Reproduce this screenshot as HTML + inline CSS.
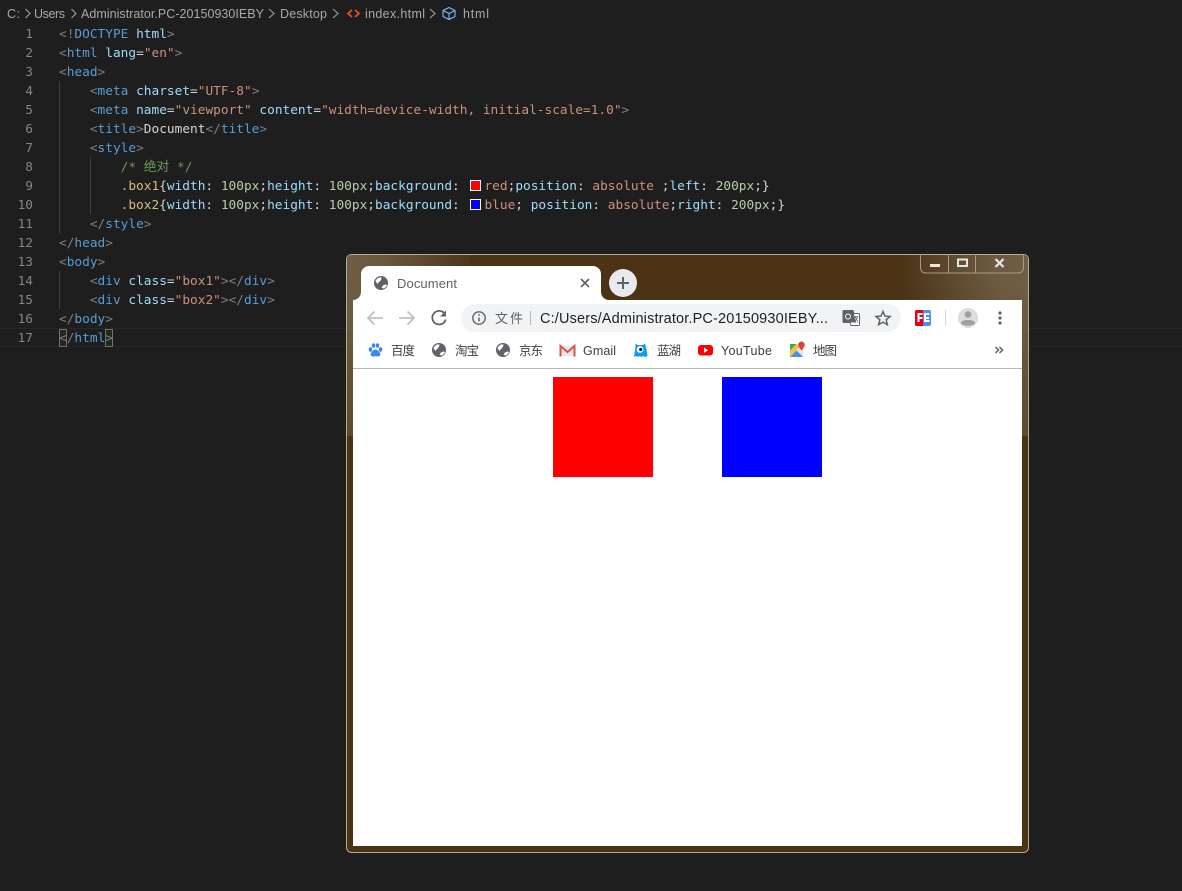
<!DOCTYPE html>
<html lang="zh">
<head>
<meta charset="utf-8">
<title>Document</title>
<style>
html,body{margin:0;padding:0;width:1182px;height:891px;overflow:hidden;background:#1e1e1e}
#wrap{position:relative;width:1182px;height:891px;overflow:hidden;background:#1e1e1e}
.abs{position:absolute}
pre{margin:0;font:12.8px/19px "DejaVu Sans Mono","Noto Sans CJK SC",monospace;position:absolute;white-space:pre;color:#d4d4d4}
#code{left:59px;top:25px}
#nums{left:0;top:25px;width:33px;text-align:right;color:#858585}
.g{color:#808080}.t{color:#569cd6}.a{color:#9cdcfe}.s{color:#ce9178}.w{color:#d4d4d4}
.c{color:#6a9955}.k{color:#d7ba7d}.n{color:#b5cea8}
.sw{display:inline-block;width:17px;height:11px;position:relative;vertical-align:-1px}
.sw i{position:absolute;left:3px;top:0;width:9px;height:9px;border:1px solid #fff}
svg text{font-family:"Liberation Sans","Noto Sans CJK SC",sans-serif}
</style>
</head>
<body>
<div id="wrap">
<div class="abs" style="left:0;top:328px;width:1182px;height:17px;border-top:1px solid #282828;border-bottom:1px solid #282828"></div>
<div class="abs" style="left:59px;top:81px;width:1px;height:152px;background:#404040"></div>
<div class="abs" style="left:90px;top:157px;width:1px;height:57px;background:#404040"></div>
<div class="abs" style="left:59px;top:271px;width:1px;height:38px;background:#404040"></div>
<div class="abs" style="left:59px;top:329px;width:6px;height:16px;border:1px solid #707070;background:#1f2a1f"></div>
<div class="abs" style="left:105px;top:329px;width:6px;height:16px;border:1px solid #707070;background:#1f2a1f"></div>
<pre id="nums">1
2
3
4
5
6
7
8
9
10
11
12
13
14
15
16
17</pre>
<pre id="code"><span class="g">&lt;!</span><span class="t">DOCTYPE</span> <span class="a">html</span><span class="g">&gt;</span>
<span class="g">&lt;</span><span class="t">html</span> <span class="a">lang</span>=<span class="s">"en"</span><span class="g">&gt;</span>
<span class="g">&lt;</span><span class="t">head</span><span class="g">&gt;</span>
    <span class="g">&lt;</span><span class="t">meta</span> <span class="a">charset</span>=<span class="s">"UTF-8"</span><span class="g">&gt;</span>
    <span class="g">&lt;</span><span class="t">meta</span> <span class="a">name</span>=<span class="s">"viewport"</span> <span class="a">content</span>=<span class="s">"width=device-width, initial-scale=1.0"</span><span class="g">&gt;</span>
    <span class="g">&lt;</span><span class="t">title</span><span class="g">&gt;</span>Document<span class="g">&lt;/</span><span class="t">title</span><span class="g">&gt;</span>
    <span class="g">&lt;</span><span class="t">style</span><span class="g">&gt;</span>
        <span class="c">/* 绝对 */</span>
        <span class="k">.box1</span>{<span class="a">width</span>: <span class="n">100px</span>;<span class="a">height</span>: <span class="n">100px</span>;<span class="a">background</span>: <span class="sw"><i style="background:#f00"></i></span><span class="s">red</span>;<span class="a">position</span>: <span class="s">absolute</span> ;<span class="a">left</span>: <span class="n">200px</span>;}
        <span class="k">.box2</span>{<span class="a">width</span>: <span class="n">100px</span>;<span class="a">height</span>: <span class="n">100px</span>;<span class="a">background</span>: <span class="sw"><i style="background:#00f"></i></span><span class="s">blue</span>; <span class="a">position</span>: <span class="s">absolute</span>;<span class="a">right</span>: <span class="n">200px</span>;}
    <span class="g">&lt;/</span><span class="t">style</span><span class="g">&gt;</span>
<span class="g">&lt;/</span><span class="t">head</span><span class="g">&gt;</span>
<span class="g">&lt;</span><span class="t">body</span><span class="g">&gt;</span>
    <span class="g">&lt;</span><span class="t">div</span> <span class="a">class</span>=<span class="s">"box1"</span><span class="g">&gt;&lt;/</span><span class="t">div</span><span class="g">&gt;</span>
    <span class="g">&lt;</span><span class="t">div</span> <span class="a">class</span>=<span class="s">"box2"</span><span class="g">&gt;&lt;/</span><span class="t">div</span><span class="g">&gt;</span>
<span class="g">&lt;/</span><span class="t">body</span><span class="g">&gt;</span>
<span class="g">&lt;/</span><span class="t">html</span><span class="g">&gt;</span></pre>

<svg class="abs" style="left:0;top:0" width="1182" height="891" viewBox="0 0 1182 891">
<defs>
<linearGradient id="vg" x1="0" y1="0" x2="0" y2="1"><stop offset="0" stop-color="#6f5d43"/><stop offset="1" stop-color="#5e4a2c"/></linearGradient>
<linearGradient id="tl" gradientUnits="userSpaceOnUse" x1="355" y1="255" x2="470" y2="290"><stop offset="0" stop-color="#6f5d43"/><stop offset=".25" stop-color="#6a583d"/><stop offset="1" stop-color="#4c3316"/></linearGradient>
<radialGradient id="tr" gradientUnits="userSpaceOnUse" cx="1050" cy="262" r="150"><stop offset="0" stop-color="#72614a"/><stop offset=".4" stop-color="#6b5a40"/><stop offset="1" stop-color="#4c3316"/></radialGradient>
</defs>
<!-- breadcrumb -->
<g font-size="12.500" fill="#a9a9a9">
<text x="7" y="18" textLength="13" lengthAdjust="spacing">C:</text>
<text x="34" y="18" textLength="31" lengthAdjust="spacing">Users</text>
<text x="81" y="18" textLength="183" lengthAdjust="spacing">Administrator.PC-20150930IEBY</text>
<text x="280" y="18" textLength="47" lengthAdjust="spacing">Desktop</text>
<text x="365" y="18" textLength="60" lengthAdjust="spacing">index.html</text>
<text x="463" y="18" textLength="26" lengthAdjust="spacing">html</text>
</g>
<g fill="none" stroke="#a0a0a0" stroke-width="1.100">
<path d="M25.500 9l4.500 4.500-4.500 4.500M71.500 9l4.500 4.500-4.500 4.500M269 9l5 4.500-5 4.500M333 9l5 4.500-5 4.500M430 9l5 4.500-5 4.500"/>
</g>
<path d="M352 10l-4 3.500 4 3.500M355 10l4 3.500-4 3.500" fill="none" stroke="#e8562a" stroke-width="1.600"/>
<path d="M449 7.500l6 3v6l-6 3-6-3v-6zM443 10.500l6 3 6-3M449 13.500v6" fill="none" stroke="#75beff" stroke-width="1.100"/>

<!-- window frame -->
<rect x="346.500" y="254.500" width="682" height="598" rx="5" fill="#4c3316" stroke="#b8ab95"/>
<path d="M347 259a4 4 0 0 1 4-4h119v45H353v136h-6z" fill="url(#tl)"/>
<path d="M347 300h6v136h-6z" fill="url(#vg)"/>
<path d="M880 255h144a4 4 0 0 1 4 4v41H880z" fill="url(#tr)"/>
<path d="M1022 300h6v136h-6z" fill="url(#vg)"/>
<path d="M351 254.500H1024M346.500 259V848" stroke="#b8ab95" fill="none"/>
<!-- window controls -->
<path d="M920.500 254v14a5 5 0 0 0 5 5h93a5 5 0 0 0 5-5V254M948.500 254v19M975.500 254v19" fill="none" stroke="#a89a84"/>
<rect x="930" y="264" width="10" height="3" fill="#e6e6e6"/>
<rect x="958" y="259.500" width="9" height="6.500" fill="none" stroke="#e6e6e6" stroke-width="2"/>
<path d="M995.500 259l8 8M1003.500 259l-8 8" stroke="#e6e6e6" stroke-width="2.200"/>

<!-- client -->
<rect x="353" y="300" width="669" height="546" fill="#fff"/>
<path d="M353 300a8 8 0 0 0 8-8v-18a8 8 0 0 1 8-8h224a8 8 0 0 1 8 8v18a8 8 0 0 0 8 8z" fill="#fff"/>
<circle cx="381" cy="283" r="7" fill="#5f6368"/>
<path d="M375.500 281c1.500-3 4-4 6-3.500l-.5 2.500-2.500 2.500-1 1.500zM381.500 287.500l2-2.500 2.500-.5 1 .5c-.8 1.800-2 3-3.500 3.500z" fill="#fff"/>
<text x="397" y="288" font-size="13" fill="#5f6368" textLength="60" lengthAdjust="spacing">Document</text>
<path d="M581 279l8 8M589 279l-8 8" stroke="#5f6368" stroke-width="1.600"/>
<circle cx="623" cy="283" r="14" fill="#e8eaed"/>
<path d="M617 283h12M623 277v12" stroke="#5f6368" stroke-width="2"/>

<!-- toolbar -->
<path d="M383 318h-15M374.500 311.500l-6.500 6.500 6.500 6.500" fill="none" stroke="#bdc1c6" stroke-width="1.800"/>
<path d="M399 318h15M407.500 311.500l6.500 6.500-6.500 6.500" fill="none" stroke="#bdc1c6" stroke-width="1.800"/>
<path d="M444.500 313.500a6.800 6.800 0 1 0 1.200 6" fill="none" stroke="#5f6368" stroke-width="1.800"/>
<path d="M446 310.500v6h-6z" fill="#5f6368"/>
<rect x="461" y="304" width="440" height="28" rx="14" fill="#f1f3f4"/>
<circle cx="479" cy="318" r="6.200" fill="none" stroke="#5f6368" stroke-width="1.400"/>
<path d="M479 317.500v4M479 314v1.600" stroke="#5f6368" stroke-width="1.500"/>
<text x="495" y="323" font-size="13" fill="#5f6368" textLength="28" lengthAdjust="spacing">文件</text>
<rect x="530" y="311" width="1" height="14" fill="#b5b7b9"/>
<text x="540" y="323" font-size="14.500" fill="#202124" textLength="288" lengthAdjust="spacing">C:/Users/Administrator.PC-20150930IEBY...</text>
<path d="M844 310.500h9l1 3h4.500a1 1 0 0 1 1 1v10a1 1 0 0 1-1 1H851l-1-3h-6a1 1 0 0 1-1-1v-10a1 1 0 0 1 1-1z" fill="#fff" stroke="#5f6368"/>
<path d="M844 310.500h9l3 12h-12a1 1 0 0 1-1-1v-10a1 1 0 0 1 1-1z" fill="#5f6368"/>
<circle cx="848" cy="316.500" r="2.500" fill="none" stroke="#fff"/>
<path d="M854 316.500h4M855 316.500l3 6M858 316.500l-3.500 6" stroke="#5f6368" stroke-width=".8" fill="none"/>
<path d="M883 311.500l2 4.600 5 .4-3.800 3.300 1.200 4.900-4.400-2.600-4.400 2.600 1.200-4.900-3.800-3.300 5-.4z" fill="none" stroke="#5f6368" stroke-width="1.500"/>
<rect x="915" y="310" width="16" height="16" rx="2" fill="#4e8df5"/>
<path d="M917 310h6v16h-6a2 2 0 0 1-2-2v-12a2 2 0 0 1 2-2z" fill="#e8000d"/>
<path d="M917.500 313h5v2h-3v2h3v2h-3v3h-2zM924 313h5.500v2H926v2h3v2h-3v1h3.500v2H924z" fill="#fff"/>
<rect x="945" y="310" width="1" height="16" fill="#d5d6d8"/>
<circle cx="968" cy="318" r="10" fill="#dcdcdc"/>
<circle cx="968" cy="314.500" r="3.300" fill="#a0a0a0"/>
<path d="M961 323.500c0-2.700 3.500-3.500 7-3.500s7 .8 7 3.500c-1.500 1.500-4 2.200-7 2.200s-5.500-.7-7-2.200z" fill="#a0a0a0"/>
<circle cx="1000" cy="313" r="1.600" fill="#5f6368"/><circle cx="1000" cy="318" r="1.600" fill="#5f6368"/><circle cx="1000" cy="323" r="1.600" fill="#5f6368"/>

<!-- bookmarks -->
<g font-size="12.500" fill="#3c4043">
<text x="391" y="355" textLength="24" lengthAdjust="spacing">百度</text>
<text x="455" y="355" textLength="24" lengthAdjust="spacing">淘宝</text>
<text x="519" y="355" textLength="24" lengthAdjust="spacing">京东</text>
<text x="583" y="355" textLength="33" lengthAdjust="spacing">Gmail</text>
<text x="657" y="355" textLength="24" lengthAdjust="spacing">蓝湖</text>
<text x="721" y="355" textLength="51" lengthAdjust="spacing">YouTube</text>
<text x="813" y="355" textLength="24" lengthAdjust="spacing">地图</text>
</g>
<!-- baidu paw -->
<g fill="#3b86f5"><ellipse cx="370.500" cy="349.500" rx="1.800" ry="2.400"/><ellipse cx="380.500" cy="349.500" rx="1.800" ry="2.400"/><ellipse cx="373.500" cy="345.500" rx="1.700" ry="2.300"/><ellipse cx="377.500" cy="345.500" rx="1.700" ry="2.300"/><path d="M375.500 349.500c2 0 2.700 1.500 4 2.700 1.600 1.500 1 4.300-1.700 4.300-1 0-1.500-.4-2.300-.4s-1.300.4-2.300.4c-2.700 0-3.300-2.800-1.700-4.300 1.300-1.200 2-2.700 4-2.700z"/></g>
<!-- globes -->
<g fill="#5f6368"><circle cx="439" cy="350" r="7"/><circle cx="503" cy="350" r="7"/></g>
<path d="M433.500 348c1.500-3 4-4 6-3.500l-.5 2.500-2.500 2.500-1 1.500zM439.500 354.500l2-2.500 2.500-.5 1 .5c-.8 1.800-2 3-3.500 3.500zM497.500 348c1.500-3 4-4 6-3.500l-.5 2.500-2.500 2.500-1 1.500zM503.500 354.500l2-2.500 2.500-.5 1 .5c-.8 1.800-2 3-3.500 3.500z" fill="#fff"/>
<!-- gmail -->
<path d="M560 345.500h14.500V356H560z" fill="#e8e8e8"/>
<path d="M560.500 356.500V346l7 6 7-6v10.500" fill="none" stroke="#d9534a" stroke-width="2"/>
<!-- lanhu -->
<path d="M635.500 343.500l2 1.500h5.500l2-1.500.5 2c1 3.500 1.500 7 2 10.500l-2.500 1-2-1-1.500 1-2-1-1.500 1-2-1-2 1c.4-3.500 1-7 1.500-10.500z" fill="#0a9bf5"/>
<circle cx="640" cy="349.500" r="3.400" fill="#fff"/><circle cx="640.700" cy="349.500" r="1.600" fill="#123"/>
<!-- youtube -->
<rect x="698" y="345" width="15" height="10.500" rx="3" fill="#f00"/>
<path d="M704 347.500l4 2.700-4 2.700z" fill="#fff"/>
<!-- maps -->
<path d="M790 344h13v13h-13z" fill="#e4e4e4"/>
<path d="M790 344h6.500l-6.500 6.500z" fill="#3aa757"/>
<path d="M790 357l6.500-6.500 6.500 6.500z" fill="#4a8df0"/>
<path d="M790 350.500l6.500-6.500 3 3-9.500 9.500z" fill="#f5c33b"/>
<path d="M801.500 341.500a3.300 3.300 0 0 1 3.300 3.300c0 2.200-3.300 5.700-3.300 5.700s-3.300-3.500-3.300-5.700a3.300 3.300 0 0 1 3.300-3.300z" fill="#db4437"/>
<path d="M995.500 347l3 3-3 3M999.500 347l3 3-3 3" fill="none" stroke="#5f6368" stroke-width="1.500"/>
<rect x="353" y="368" width="669" height="1" fill="#b8b8b8"/>
<rect x="553" y="377" width="100" height="100" fill="#f00"/>
<rect x="722" y="377" width="100" height="100" fill="#00f"/>
</svg>
</div>
</body>
</html>
